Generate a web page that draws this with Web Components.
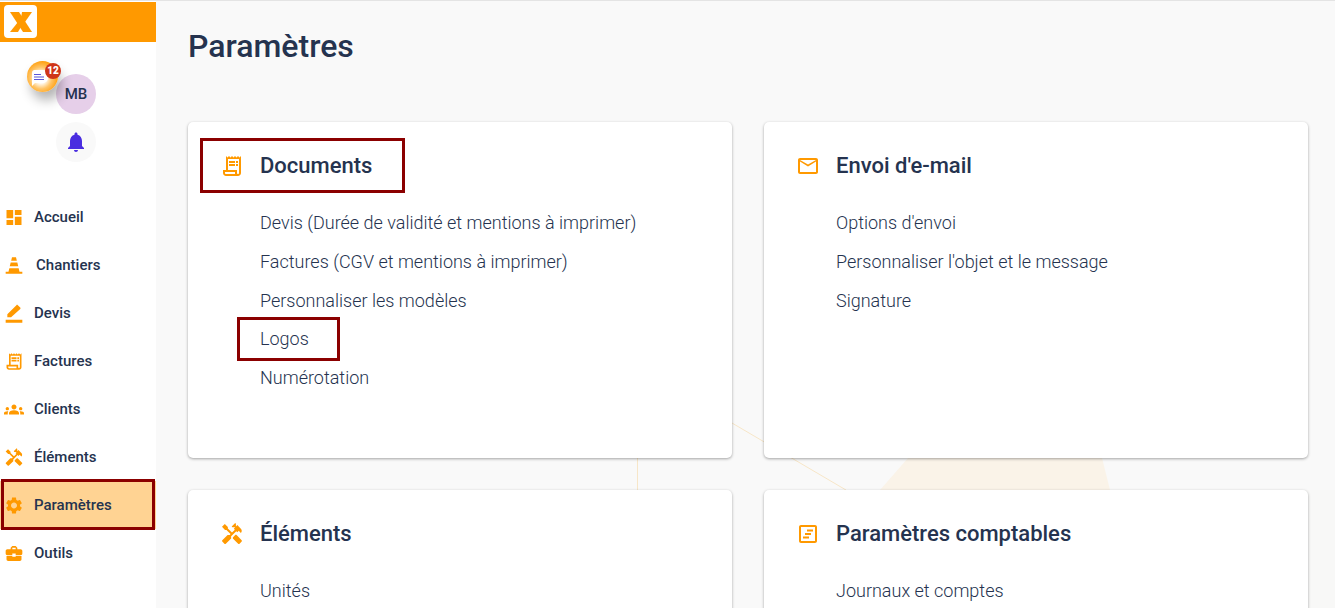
<!DOCTYPE html>
<html lang="fr">
<head>
<meta charset="utf-8">
<title>Paramètres</title>
<style>
html,body{margin:0;height:100%;overflow:hidden;background:#f9f9f9;}
body{font-family:Roboto,"Liberation Sans",sans-serif;color:#25334f;}
</style>
</head>
<body>
<app-shell>
    <app-sidebar slot="side">
        <nav-item icon="dashboard">Accueil</nav-item>
        <nav-item icon="cone" wide>Chantiers</nav-item>
        <nav-item icon="pen">Devis</nav-item>
        <nav-item icon="receipt">Factures</nav-item>
        <nav-item icon="groups">Clients</nav-item>
        <nav-item icon="tools">Éléments</nav-item>
        <nav-item icon="gear" active>Paramètres</nav-item>
        <nav-item icon="toolbox">Outils</nav-item>
    </app-sidebar>
    <h1 slot="title">Paramètres</h1>
    <settings-card icon="receipt" label="Documents" marked>
        <card-link>Devis (Durée de validité et mentions à imprimer)</card-link>
        <card-link>Factures (CGV et mentions à imprimer)</card-link>
        <card-link>Personnaliser les modèles</card-link>
        <card-link marked>Logos</card-link>
        <card-link>Numérotation</card-link>
    </settings-card>
    <settings-card icon="mail" label="Envoi d'e-mail">
        <card-link>Options d'envoi</card-link>
        <card-link>Personnaliser l'objet et le message</card-link>
        <card-link>Signature</card-link>
    </settings-card>
    <settings-card icon="tools" label="Éléments">
        <card-link>Unités</card-link>
    </settings-card>
    <settings-card icon="ledger" label="Paramètres comptables">
        <card-link>Journaux et comptes</card-link>
    </settings-card>
</app-shell>
<script>
const ICONS = {
    dashboard: '<path d="M3 13h8V3H3v10zm0 8h8v-6H3v6zm10 0h8V11h-8v10zm0-18v6h8V3h-8z"/>',
    cone: '<path d="M9.6 2h4.8l1 4.2H8.600zM8 8.400h8l1.100 4.600H6.900zM6.400 15.200h11.200l1 4.300H22V22H2v-2.500h3.400z"/>',
    pen: '<path d="M2 19.500h20V23H2zM4 16.500v-3.600L14.900 2c.5-.5 1.200-.5 1.700 0l2.900 2.900c.5.5.5 1.200 0 1.700L8.500 16.500z"/>',
    receipt: '<path d="M19.500 3.500L18 2l-1.500 1.500L15 2l-1.500 1.500L12 2l-1.500 1.500L9 2 7.500 3.500 6 2v14H3v3c0 1.660 1.340 3 3 3h12c1.660 0 3-1.340 3-3V2l-1.500 1.500zM15 20H6c-.55 0-1-.45-1-1v-1h10v2zm4-1c0 .55-.45 1-1 1s-1-.45-1-1v-3H8V5h11v14z"/><path d="M9 7h6v2H9zm7 0h2v2h-2zm-7 3h6v2H9zm7 0h2v2h-2z"/>',
    groups: '<path d="M12 12.750c1.630 0 3.070.39 4.240.9 1.080.48 1.760 1.560 1.760 2.730V18H6v-1.610c0-1.180.68-2.260 1.760-2.730 1.170-.52 2.610-.91 4.240-.91zM4 13c1.100 0 2-.9 2-2s-.9-2-2-2-2 .9-2 2 .9 2 2 2zm1.130 1.100c-.37-.06-.74-.1-1.130-.1-.99 0-1.930.21-2.780.58C.48 14.900 0 15.620 0 16.430V18h4.500v-1.610c0-.83.23-1.610.63-2.290zM20 13c1.100 0 2-.9 2-2s-.9-2-2-2-2 .9-2 2 .9 2 2 2zm4 3.430c0-.81-.48-1.530-1.220-1.850-.85-.37-1.790-.58-2.780-.58-.39 0-.76.04-1.130.1.4.68.63 1.460.63 2.290V18H24v-1.570zM12 6c1.660 0 3 1.340 3 3s-1.340 3-3 3-3-1.340-3-3 1.340-3 3-3z"/>',
    tools: '<path d="M21.670 18.170l-5.300-5.300h-.99l-2.540 2.540v.99l5.300 5.300c.39.39 1.020.39 1.410 0l2.120-2.120c.39-.38.39-1.020 0-1.410z"/><path d="M17.340 10.190l1.410-1.410 2.120 2.120c1.170-1.170 1.170-3.070 0-4.240l-3.540-3.540-1.410 1.410V1.710l-.7-.71-3.540 3.540.71.71h2.830l-1.410 1.410 1.060 1.060-2.890 2.890-4.130-4.130V5.060L4.830 2.040 2 4.870 5.030 7.900h1.410l4.130 4.130-.85.85H7.600l-5.300 5.300c-.39.39-.39 1.020 0 1.410l2.120 2.120c.39.39 1.020.39 1.410 0l5.300-5.300v-2.120l5.150-5.150 1.060 1.050z"/>',
    gear: '<path d="M19.140 12.940c.04-.3.060-.61.060-.94 0-.32-.02-.64-.07-.94l2.030-1.580c.18-.14.23-.41.12-.61l-1.920-3.320c-.12-.22-.37-.29-.59-.22l-2.390.96c-.5-.38-1.030-.7-1.620-.94l-.36-2.540c-.04-.24-.24-.41-.48-.41h-3.840c-.24 0-.43.17-.47.41l-.36 2.540c-.59.24-1.130.57-1.620.94l-2.390-.96c-.22-.08-.47 0-.59.22L2.740 8.870c-.12.21-.08.47.12.61l2.030 1.580c-.05.3-.09.63-.09.94s.02.64.07.94l-2.030 1.580c-.18.14-.23.41-.12.61l1.920 3.320c.12.22.37.29.59.22l2.390-.96c.5.38 1.030.7 1.620.94l.36 2.540c.05.24.24.41.48.41h3.840c.24 0 .44-.17.47-.41l.36-2.540c.59-.24 1.130-.56 1.620-.94l2.390.96c.22.08.47 0 .59-.22l1.920-3.320c.12-.22.07-.47-.12-.61l-2.010-1.580zM12 15.600c-1.980 0-3.600-1.620-3.600-3.600s1.620-3.600 3.600-3.600 3.600 1.620 3.600 3.600-1.620 3.600-3.600 3.600z"/>',
    toolbox: '<path d="M10 16v-1H3.010L3 19c0 1.110.89 2 2 2h14c1.110 0 2-.89 2-2v-4h-7v1h-4zm10-9h-4.010V5l-2-2h-4l-2 2v2H4c-1.100 0-2 .9-2 2v3c0 1.110.89 2 2 2h6v-2h4v2h6c1.100 0 2-.9 2-2V9c0-1.100-.9-2-2-2zm-6 0h-4V5h4v2z"/>',
    mail: '<path d="M20 4H4c-1.100 0-1.990.9-1.990 2L2 18c0 1.100.9 2 2 2h16c1.100 0 2-.9 2-2V6c0-1.100-.9-2-2-2zm0 14H4V7.500l8 5 8-5V18zm-8-7.500L4 6h16l-8 4.500z"/>',
    ledger: '<path d="M5 3h14c1.100 0 2 .9 2 2v14c0 1.100-.9 2-2 2H5c-1.100 0-2-.9-2-2V5c0-1.100.9-2 2-2zm0 2v14h14V5H5z"/><path d="M11 7.500h6v2h-6zM9 11h6v2H9zM7 14.500h6v2H7z"/>',
    bell: '<path d="M12 22c1.100 0 2-.9 2-2h-4c0 1.100.89 2 2 2zm6-6v-5c0-3.070-1.640-5.640-4.500-6.320V4c0-.83-.67-1.500-1.500-1.500s-1.500.67-1.500 1.500v.68C7.630 5.360 6 7.920 6 11v5l-2 2v1h16v-1l-2-2z"/>'
};

function svgIcon(name, size){
    return `<svg width="${size}" height="${size}" viewBox="0 0 24 24" fill="currentColor">${ICONS[name]}</svg>`;
}

class AppShell extends HTMLElement{
    constructor(){
        super();
        this.attachShadow({mode: 'open'});
        this.shadowRoot.innerHTML = `
        <style>
        :host{
            display:flex;
            height:608px;
            box-sizing:border-box;
            border-top:1px solid #e4e4e4;
        }
        main{
            position:relative;
            flex:1;
            overflow:hidden;
            background:#f9f9f9;
            padding:26px 0 0 32px;
        }
        .decor{
            position:absolute;
            left:0;
            top:0;
            width:1179px;
            height:607px;
        }
        ::slotted(h1){
            position:relative;
            margin:0 0 57px;
            font-size:32px;
            line-height:38px;
            font-weight:500;
            color:#25334f;
        }
        .grid{
            position:relative;
            display:grid;
            grid-template-columns:544px 544px;
            grid-auto-rows:336px;
            gap:32px;
        }
        </style>
        <slot name="side"></slot>
        <main>
            <svg class="decor" viewBox="0 0 1179 607">
                <polygon points="640,489 1179,489 1179,607 640,607" fill="#f8f8f7"/>
                <polygon points="724,489 752,457 946,457 954,489" fill="#faf3e8"/>
                <line x1="576" y1="422" x2="690" y2="489" stroke="#f7e6c8"/>
                <line x1="481.500" y1="457" x2="481.500" y2="489" stroke="#f7e6c8"/>
            </svg>
            <slot name="title"></slot>
            <div class="grid"><slot></slot></div>
        </main>
        `
    }
}
customElements.define("app-shell", AppShell)

class AppSidebar extends HTMLElement{
    constructor(){
        super();
        this.attachShadow({mode: 'open'});
        this.shadowRoot.innerHTML = `
        <style>
        :host{
            display:block;
            flex:0 0 156px;
            background:#fff;
        }
        .brand{
            margin-top:1px;
            height:40px;
            background:#ff9900;
            padding:3px 0 0 4px;
            box-sizing:border-box;
        }
        .brand svg{display:block;}
        .people{
            position:relative;
            height:151px;
            display:flex;
            flex-direction:column;
            align-items:center;
            padding:32px 0 0 0;
            box-sizing:border-box;
        }
        .avatar,.bell{
            width:40px;
            height:40px;
            border-radius:50%;
            display:flex;
            align-items:center;
            justify-content:center;
            margin-left:-4px;
        }
        .avatar{
            background:#e6cfe9;
            font-size:15px;
            font-weight:500;
            color:#25334f;
        }
        .bell{
            margin-top:8px;
            background:#f9f9f9;
            color:#4a2de0;
        }
        .chat{
            position:absolute;
            left:27px;
            top:19px;
            width:31px;
            height:31px;
            border-radius:50%;
            background:radial-gradient(circle at 45% 55%,#fff 0 20%,#ffc466 45%,#ff9900 75%);
            box-shadow:4px 8px 12px rgba(0,0,0,.3);
        }
        .chat svg{position:absolute;left:4px;top:9px;}
        .badge{
            position:absolute;
            left:18px;
            top:2px;
            width:16px;
            height:16px;
            border-radius:50%;
            background:#cf3419;
            color:#fff;
            font-size:10px;
            font-weight:900;
            line-height:16px;
            text-align:center;
        }
        </style>
        <div class="brand">
            <svg width="33" height="33" viewBox="0 0 33 33">
                <rect width="33" height="33" rx="4" fill="#fff"/>
                <polygon points="6,7 15,7 28,27 19,27" fill="#ff9900"/>
                <polygon points="18,7 28,7 21,17 17,13" fill="#ff9900"/>
                <polygon points="6,27 14,17 17.500,21 14,27" fill="#ff9900"/>
            </svg>
        </div>
        <div class="people">
            <div class="avatar">MB</div>
            <div class="bell">${svgIcon('bell', 24)}</div>
            <div class="chat">
                <svg width="18" height="17" viewBox="0 0 18 17">
                    <path d="M3 0h9a5 5 0 0 1 5 5v3a5 5 0 0 1-5 5H4l-3 3V3a3 3 0 0 1 2-3z" fill="#fff"/>
                    <path d="M3 4h7v1H3zM3 6.500h10v1H3zM3 9h10v1H3z" fill="#5a55d8"/>
                </svg>
                <span class="badge">12</span>
            </div>
        </div>
        <slot></slot>
        `
    }
}
customElements.define("app-sidebar", AppSidebar)

class NavItem extends HTMLElement{
    constructor(){
        super();
        this.attachShadow({mode: 'open'});
        this.shadowRoot.innerHTML = `
        <style>
        :host{
            display:flex;
            position:relative;
            align-items:center;
            height:48px;
            padding-left:4px;
            font-size:15px;
            font-weight:500;
            color:#25334f;
        }
        :host([active]){
            background:#ffd393;
        }
        :host([active])::after{
            content:"";
            position:absolute;
            left:1px;
            right:1px;
            top:-2px;
            bottom:-1px;
            border:3px solid #8b0000;
            box-sizing:border-box;
        }
        .icon{
            width:20px;
            height:20px;
            margin-right:10px;
            color:#ff9900;
            display:flex;
            position:relative;
        }
        :host([wide]) .icon{margin-right:12px;width:20px;}
        span{position:relative;}
        </style>
        <div class="icon"></div>
        <span><slot></slot></span>
        `
    }
    connectedCallback(){
        this.shadowRoot.querySelector(".icon").innerHTML = svgIcon(this.getAttribute("icon"), 21);
    }
}
customElements.define("nav-item", NavItem)

class SettingsCard extends HTMLElement{
    constructor(){
        super();
        this.attachShadow({mode: 'open'});
        this.shadowRoot.innerHTML = `
        <style>
        :host{
            display:block;
            background:#fff;
            border-radius:5px;
            box-shadow:0 1px 3px rgba(0,0,0,.35);
            padding-top:16px;
            box-sizing:border-box;
        }
        header{
            display:flex;
            align-items:center;
            position:relative;
            height:55px;
            padding-left:32px;
            margin-bottom:11px;
        }
        .icon{
            width:24px;
            height:24px;
            margin-right:16px;
            color:#ff9900;
        }
        .icon svg{display:block;}
        h2{
            margin:0;
            font-size:22px;
            font-weight:500;
            color:#25334f;
        }
        :host([marked]) header::after{
            content:"";
            position:absolute;
            left:12px;
            top:0;
            width:205px;
            height:55px;
            border:3px solid #8b0000;
            box-sizing:border-box;
        }
        </style>
        <header>
            <div class="icon"></div>
            <h2></h2>
        </header>
        <slot></slot>
        `
    }
    connectedCallback(){
        this.shadowRoot.querySelector(".icon").innerHTML = svgIcon(this.getAttribute("icon"), 24);
        this.shadowRoot.querySelector("h2").textContent = this.getAttribute("label");
    }
}
customElements.define("settings-card", SettingsCard)

class CardLink extends HTMLElement{
    constructor(){
        super();
        this.attachShadow({mode: 'open'});
        this.shadowRoot.innerHTML = `
        <style>
        :host{
            display:block;
            position:relative;
            padding-left:72px;
            height:38.800px;
            line-height:38.800px;
            font-size:18px;
            font-weight:300;
            color:#25334f;
        }
        :host([marked])::after{
            content:"";
            position:absolute;
            left:49px;
            top:-3px;
            width:103px;
            height:44px;
            border:3px solid #8b0000;
            box-sizing:border-box;
        }
        </style>
        <slot></slot>
        `
    }
}
customElements.define("card-link", CardLink)
</script>
</body>
</html>
